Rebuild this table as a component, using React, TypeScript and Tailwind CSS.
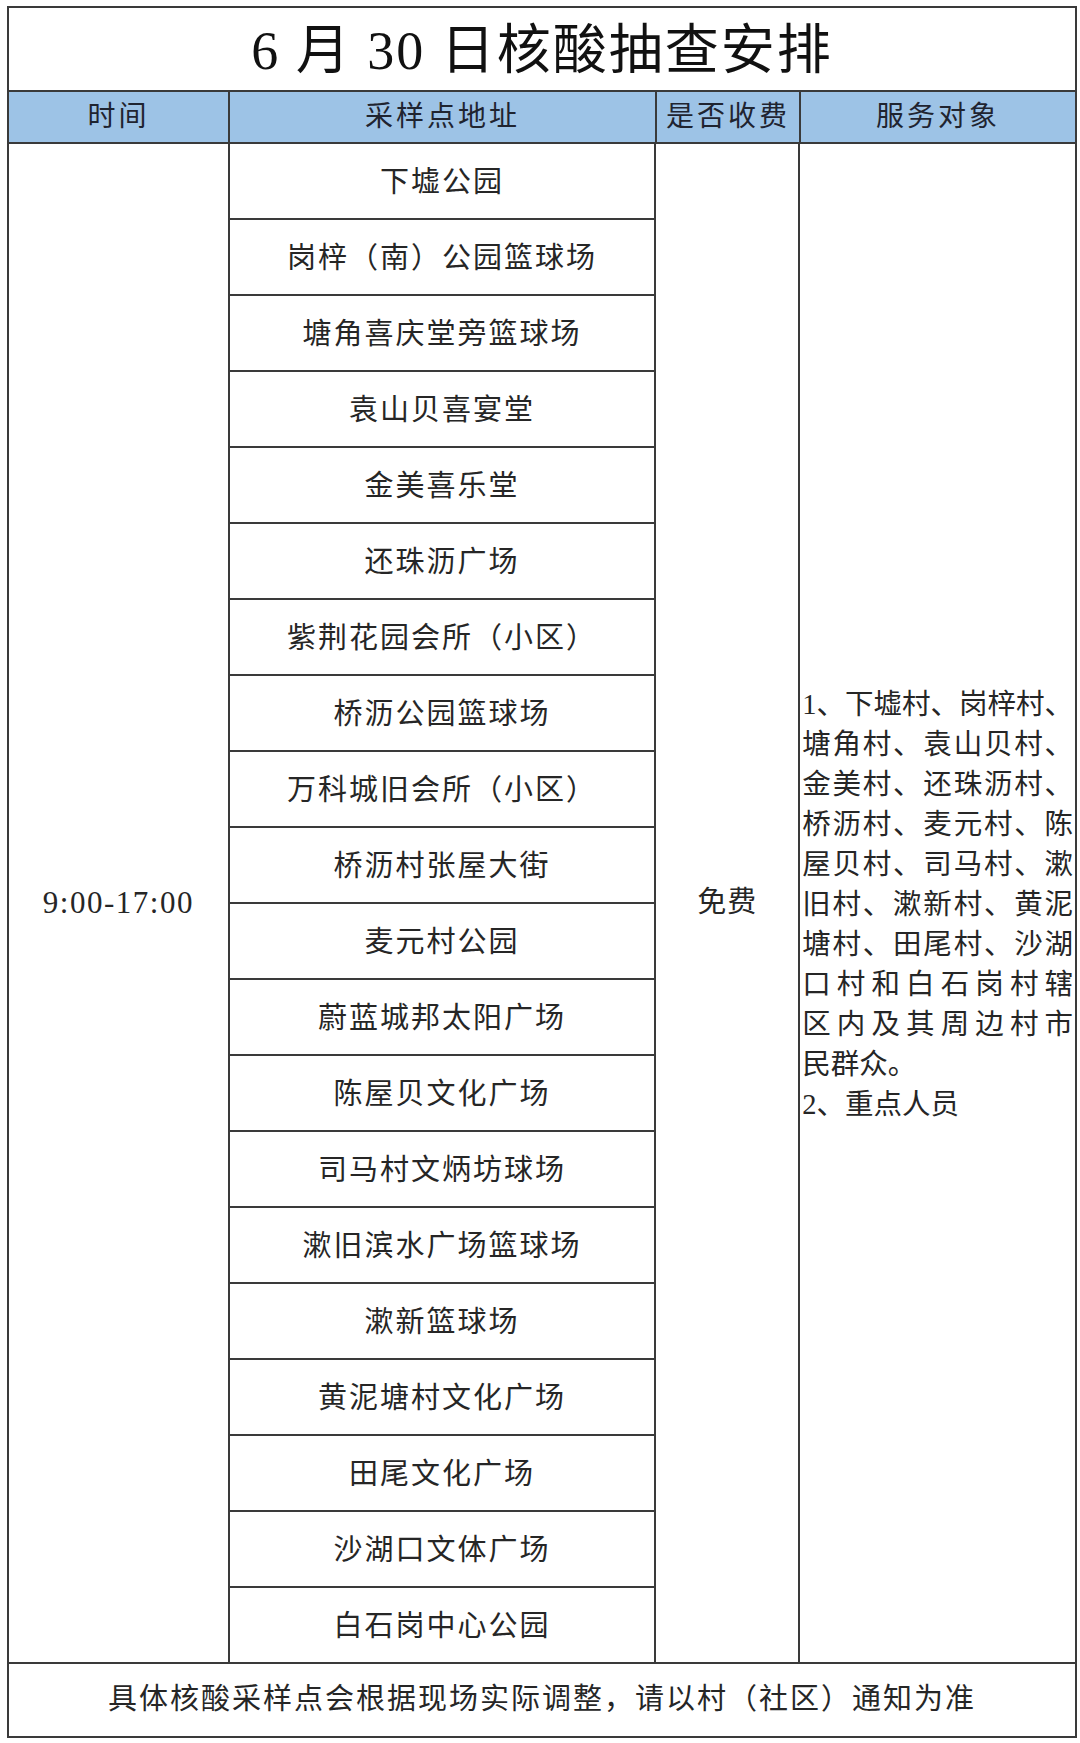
import React from 'react'

const sites = [
  '下墟公园',
  '岗梓（南）公园篮球场',
  '塘角喜庆堂旁篮球场',
  '袁山贝喜宴堂',
  '金美喜乐堂',
  '还珠沥广场',
  '紫荆花园会所（小区）',
  '桥沥公园篮球场',
  '万科城旧会所（小区）',
  '桥沥村张屋大街',
  '麦元村公园',
  '蔚蓝城邦太阳广场',
  '陈屋贝文化广场',
  '司马村文炳坊球场',
  '漱旧滨水广场篮球场',
  '漱新篮球场',
  '黄泥塘村文化广场',
  '田尾文化广场',
  '沙湖口文体广场',
  '白石岗中心公园',
]

// 服务对象 wraps exactly like the source sheet, so each line is set by hand
const serviceLines = [
  { text: '1、下墟村、岗梓村、', justify: true },
  { text: '塘角村、袁山贝村、', justify: true },
  { text: '金美村、还珠沥村、', justify: true },
  { text: '桥沥村、麦元村、陈', justify: true },
  { text: '屋贝村、司马村、漱', justify: true },
  { text: '旧村、漱新村、黄泥', justify: true },
  { text: '塘村、田尾村、沙湖', justify: true },
  { text: '口村和白石岗村辖', justify: true },
  { text: '区内及其周边村市', justify: true },
  { text: '民群众。', justify: false },
  { text: '2、重点人员', justify: false },
]

const headers = [
  { label: '时间', width: 'w-[221px] border-r-2' },
  { label: '采样点地址', width: 'w-[427px] border-r-2' },
  { label: '是否收费', width: 'w-[144px] border-r-2' },
  { label: '服务对象', width: 'flex-1' },
]

export default function App() {
  return (
    <div className="w-[1080px] h-[1743px] bg-white pl-[7px] pt-[6px] font-['Liberation_Serif','Noto_Sans_CJK_SC',serif] text-[#262626]">
      <div className="w-[1070px] border-2 border-[#3a3a3a] flex flex-col">
        {/* title */}
        <div className="h-[84px] border-b-2 border-[#3a3a3a] flex items-center justify-center">
          <h1 className="text-[54px] leading-none tracking-[2px] text-[#111] pt-[4px]">6 月 30 日核酸抽查安排</h1>
        </div>

        {/* header row */}
        <div className="h-[52px] border-b-2 border-[#3a3a3a] bg-[#9dc3e6] flex">
          {headers.map((h) => (
            <div key={h.label} className={`${h.width} border-[#3a3a3a] flex items-center justify-center text-[28px] tracking-[3px] text-[#1f2430]`}>
              {h.label}
            </div>
          ))}
        </div>

        {/* body */}
        <div className="h-[1520px] border-b-2 border-[#3a3a3a] flex">
          <div className="w-[221px] border-r-2 border-[#3a3a3a] flex items-center justify-center text-[31px] tracking-[1.5px]">
            9:00-17:00
          </div>
          <div className="w-[427px] border-r-2 border-[#3a3a3a] flex flex-col">
            {sites.map((site, i) => (
              <div
                key={site}
                className={`${i === sites.length - 1 ? 'h-[74px]' : 'h-[76px] border-b-2'} border-[#3a3a3a] flex items-center justify-center text-[29px] tracking-[2px] pt-[4px]`}
              >
                {site}
              </div>
            ))}
          </div>
          <div className="w-[144px] border-r-2 border-[#3a3a3a] flex items-center justify-center text-[29px] tracking-[1px]">
            免费
          </div>
          <div className="flex-1 flex flex-col justify-center pl-[2px] pr-[2px] pt-[4px]">
            {serviceLines.map((line) => (
              <div
                key={line.text}
                className={`h-[40px] leading-[40px] text-[28.5px] whitespace-nowrap ${line.justify ? 'text-justify [text-align-last:justify]' : 'text-left'}`}
              >
                {line.text}
              </div>
            ))}
          </div>
        </div>

        {/* footer note */}
        <div className="h-[72px] flex items-center justify-center text-[29px] tracking-[2px]">
          具体核酸采样点会根据现场实际调整，请以村（社区）通知为准
        </div>
      </div>
    </div>
  )
}
